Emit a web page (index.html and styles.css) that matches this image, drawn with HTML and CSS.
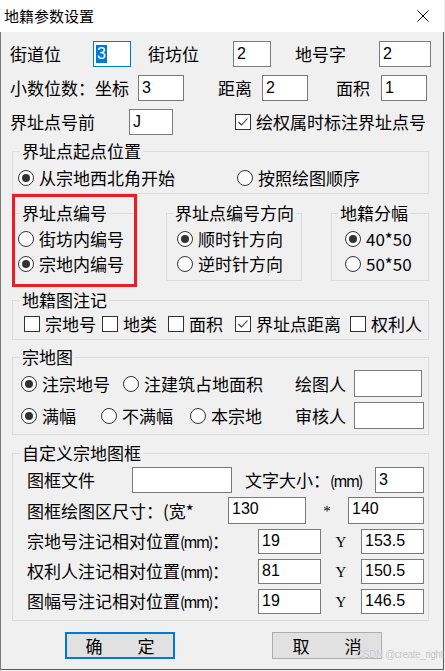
FILE: index.html
```html
<!DOCTYPE html>
<html>
<head lang="zh">
  <meta charset="UTF-8">
  <title>地籍参数设置</title>
  <link rel="stylesheet" href="styles.css">
</head>
<body>
<div class="dlg">
  <div class="caption">
    <span class="caption-text">地籍参数设置</span>
    <svg class="close" width="12" height="12" viewBox="0 0 12 12"><path d="M0.5 0.5 L11.5 11.5 M11.5 0.5 L0.5 11.5" stroke="#000" stroke-width="1" fill="none"/></svg>
  </div>

  <div class="client">
    <!--编码-->
    <div class="row r1">
      <span class="lb street">街道位</span>
      <span class="edit focus w38"><span class="sel">3</span></span>
      <span class="lb block">街坊位</span>
      <span class="edit w38">2</span>
      <span class="lb parcel">地号字</span>
      <span class="edit w52">2</span>
    </div>
    <div class="row r2">
      <span class="lb decimals">小数位数：坐标</span>
      <span class="edit w46">3</span>
      <span class="lb dist">距离</span>
      <span class="edit w46">2</span>
      <span class="lb area">面积</span>
      <span class="edit w46">1</span>
    </div>
    <div class="row r3">
      <span class="lb prefix">界址点号前</span>
      <span class="edit w44">J</span>
      <span class="opt mark-pt"><span class="chk on"><svg width="14" height="14" viewBox="0 0 14 14"><path d="M2.5 7 L5.5 10 L11.5 3.5" stroke="#333" stroke-width="1.1" fill="none"/></svg></span>绘权属时标注界址点号</span>
    </div>

    <!--界址点起点位置-->
    <fieldset class="fs full fs-start">
      <legend>界址点起点位置</legend>
      <div class="row opts start-row">
        <span class="opt o219"><span class="radio on"></span>从宗地西北角开始</span>
        <span class="opt"><span class="radio"></span>按照绘图顺序</span>
      </div>
    </fieldset>

    <div class="grp-row">
      <fieldset class="fs fs-num">
        <legend>界址点编号</legend>
        <div class="row opts"><span class="opt"><span class="radio"></span>街坊内编号</span></div>
        <div class="row opts"><span class="opt"><span class="radio on"></span>宗地内编号</span></div>
      </fieldset>
      <fieldset class="fs fs-dir">
        <legend>界址点编号方向</legend>
        <div class="row opts"><span class="opt"><span class="radio on"></span>顺时针方向</span></div>
        <div class="row opts"><span class="opt"><span class="radio"></span>逆时针方向</span></div>
      </fieldset>
      <fieldset class="fs fs-sheet">
        <legend>地籍分幅</legend>
        <div class="row opts"><span class="opt"><span class="radio on"></span>40*50</span></div>
        <div class="row opts"><span class="opt"><span class="radio"></span>50*50</span></div>
      </fieldset>
      <div class="redmark"></div>
    </div>

    <!--地籍图注记-->
    <fieldset class="fs full fs-notes">
      <legend>地籍图注记</legend>
      <div class="row opts notes-row">
        <span class="opt o78"><span class="chk"></span>宗地号</span>
        <span class="opt o66"><span class="chk"></span>地类</span>
        <span class="opt o67"><span class="chk"></span>面积</span>
        <span class="opt o115"><span class="chk on"><svg width="14" height="14" viewBox="0 0 14 14"><path d="M2.5 7 L5.5 10 L11.5 3.5" stroke="#333" stroke-width="1.1" fill="none"/></svg></span>界址点距离</span>
        <span class="opt"><span class="chk"></span>权利人</span>
      </div>
    </fieldset>

    <!--宗地图-->
    <fieldset class="fs full fs-plot">
      <legend>宗地图</legend>
      <div class="row plot-a">
        <span class="opt o102"><span class="radio on"></span>注宗地号</span>
        <span class="opt o172"><span class="radio"></span>注建筑占地面积</span>
        <span class="lb man">绘图人</span>
        <span class="edit w68"></span>
      </div>
      <div class="row plot-b">
        <span class="opt o80"><span class="radio on"></span>满幅</span>
        <span class="opt o89"><span class="radio"></span>不满幅</span>
        <span class="opt o105"><span class="radio"></span>本宗地</span>
        <span class="lb man">审核人</span>
        <span class="edit w70"></span>
      </div>
    </fieldset>

    <!--自定义宗地图框-->
    <fieldset class="fs full fs-frame">
      <legend>自定义宗地图框</legend>
      <div class="row fr fr1">
        <span class="lb file">图框文件</span>
        <span class="edit w100"></span>
        <span class="lb fsize">文字大小：<span class="mm">(mm)</span></span>
        <span class="edit w49">3</span>
      </div>
      <div class="row fr fr2">
        <span class="lb dim">图框绘图区尺寸：(宽*</span>
        <span class="edit w78 hi">130</span>
        <span class="lb star">*</span>
        <span class="edit w76 hi">140</span>
      </div>
      <div class="row fr fr3">
        <span class="lb pos">宗地号注记相对位置<span class="mm">(mm)</span>：</span>
        <span class="edit w63 hi">19</span>
        <span class="lb ylb">Y</span>
        <span class="edit w63 hi">153.5</span>
      </div>
      <div class="row fr fr3">
        <span class="lb pos">权利人注记相对位置<span class="mm">(mm)</span>：</span>
        <span class="edit w63 hi">81</span>
        <span class="lb ylb">Y</span>
        <span class="edit w63 hi">150.5</span>
      </div>
      <div class="row fr fr3">
        <span class="lb pos">图幅号注记相对位置<span class="mm">(mm)</span>：</span>
        <span class="edit w63 hi">19</span>
        <span class="lb ylb">Y</span>
        <span class="edit w63 hi">146.5</span>
      </div>
    </fieldset>

    <div class="btns">
      <span class="btn default"><span>确</span><span>定</span></span>
      <span class="btn"><span>取</span><span>消</span></span>
    </div>
  </div>

  <span class="watermark">CSDN @create_right</span>
</div>
</body>
</html>
```

FILE: styles.css
```css
* {
  margin: 0;
  padding: 0;
}

body {
  background-color: #f0f0f0;
  font-family: "Noto Sans CJK SC", "Noto Sans", sans-serif;
  font-size: 17px;
  color: #000;
}

.dlg {
  position: relative;
  width: 444px;
  height: 670px;
  box-sizing: border-box;
  background-color: #f0f0f0;
  box-shadow: inset 1px 0 #7a7a7a, inset -1px 0 #5a5a5a, inset 0 -1px #5a5a5a;
}

.caption {
  height: 32px;
  background-color: #fff;
  display: flex;
  align-items: center;
  justify-content: space-between;
  padding: 0 15px 0 4px;
}

.caption-text {
  font-size: 15px;
  line-height: 20px;
}

.client {
  padding-left: 10px;
}

.row {
  display: flex;
  align-items: center;
}

.lb {
  flex: none;
  line-height: 20px;
  white-space: nowrap;
}

.edit {
  flex: none;
  box-sizing: border-box;
  height: 26px;
  border: 1px solid #7a7a7a;
  background-color: #fff;
  padding-left: 3px;
  font-family: "Liberation Sans", sans-serif;
  font-size: 16px;
  display: flex;
  align-items: center;
}

.edit.focus {
  border-color: #0078d7;
  padding-left: 2px;
}

.sel {
  background-color: #0078d7;
  color: #fff;
  line-height: 18px;
  padding: 0 1px;
}

.w38 { width: 38px; }
.w44 { width: 44px; }
.w46 { width: 46px; }
.w49 { width: 49px; }
.w52 { width: 52px; }
.w63 { width: 63px; }
.w68 { width: 68px; }
.w70 { width: 70px; }
.w76 { width: 76px; }
.w78 { width: 78px; }
.w100 { width: 100px; }

/* 顶部三行 */
.r1 { margin-top: 9px; height: 26px; }
.r2 { margin-top: 8px; height: 26px; }
.r3 { margin-top: 8px; height: 26px; }

.street { width: 83px; }
.block { margin-left: 17px; width: 85px; }
.parcel { margin-left: 24px; width: 84px; }
.decimals { width: 128px; }
.dist { margin-left: 34px; width: 44px; }
.area { margin-left: 28px; width: 45px; }
.prefix { width: 119px; }
.mark-pt { margin-left: 62px; }

/* 单选、复选 */
.opt {
  flex: none;
  display: flex;
  align-items: center;
  line-height: 20px;
  white-space: nowrap;
}

.radio,
.chk {
  flex: none;
  box-sizing: border-box;
  width: 16px;
  height: 16px;
  border: 1px solid #333;
  background-color: #fff;
  margin-right: 5px;
  display: flex;
  align-items: center;
  justify-content: center;
}

.radio {
  border-radius: 50%;
}

.radio.on::after {
  content: "";
  width: 8px;
  height: 8px;
  border-radius: 50%;
  background-color: #333;
}

.o66 { width: 66px; }
.o67 { width: 67px; }
.o78 { width: 78px; }
.o80 { width: 80px; }
.o89 { width: 89px; }
.o102 { width: 102px; }
.o105 { width: 105px; }
.o115 { width: 115px; }
.o172 { width: 172px; }
.o219 { width: 219px; }

/* 分组框 */
.fs {
  box-sizing: border-box;
  border: 1px solid #dcdcdc;
  min-width: 0;
}

.fs legend {
  margin-left: 7px;
  padding: 0 2px;
  line-height: 20px;
}

.full {
  margin-left: 2px;
  width: 417px;
}

.fs-start {
  margin-top: 6px;
  padding-bottom: 4px;
}

.start-row {
  margin-top: 6px;
  height: 22px;
  padding-left: 5px;
}

.grp-row {
  position: relative;
  display: flex;
  align-items: flex-start;
  margin: 9px 0 0 2px;
  width: 417px;
}

.grp-row .opts {
  height: 22px;
  margin-top: 3px;
}

.grp-row .opts:first-of-type {
  margin-top: 5px;
}

.grp-row .fs {
  padding-bottom: 5px;
}

.fs-num {
  margin-left: 2px;
  width: 122px;
}

.grp-row .fs-num {
  padding-bottom: 9px;
}

.fs-num legend {
  margin-left: 5px;
}

.fs-num .opts {
  padding-left: 3px;
}

.fs-dir {
  margin-left: 30px;
  width: 136px;
}

.fs-dir legend,
.fs-sheet legend {
  margin-left: 6px;
}

.fs-dir .opts {
  padding-left: 10px;
}

.fs-sheet {
  margin-left: 29px;
  width: 98px;
}

.fs-sheet .opts {
  padding-left: 13px;
}

.redmark {
  position: absolute;
  left: 0;
  top: -9px;
  width: 125px;
  height: 93px;
  box-sizing: border-box;
  border: 3px solid #ec1c24;
}

.fs-notes {
  margin-top: 5px;
  padding-bottom: 4px;
}

.notes-row {
  margin-top: 3px;
  height: 22px;
  padding-left: 11px;
}

.fs-plot {
  margin-top: 7px;
  padding-bottom: 5px;
}

.plot-a,
.plot-b {
  height: 27px;
  padding-left: 8px;
}

.plot-a { margin-top: 3px; }
.plot-b { margin-top: 5px; }
.plot-b .edit { height: 27px; }
.plot-a .edit { height: 27px; }

.man { width: 59px; }

.fs-frame {
  margin-top: 8px;
  padding-bottom: 6px;
}

.fr {
  padding-left: 14px;
  align-items: stretch;
}

.fr .lb {
  align-self: center;
}

.fr .edit {
  height: auto;
}

.fr .edit.hi {
  align-items: flex-start;
  padding-top: 2px;
  line-height: 18px;
}

.fr1 { margin-top: 4px; height: 26px; }
.fr2 { margin-top: 4px; height: 27px; }
.fr3 { margin-top: 5px; height: 25px; }

.file { width: 105px; }
.fsize { margin-left: 13px; width: 130px; }
.dim { width: 201px; }
.pos { width: 231px; }

.star,
.ylb {
  text-align: center;
  font-family: "Liberation Serif", serif;
  font-size: 15px;
}

.star { width: 42px; }
.ylb { width: 40px; }

.mm {
  font-size: 15px;
  letter-spacing: -1.5px;
}

/* 按钮 */
.btns {
  display: flex;
  margin-top: 11px;
  padding-left: 55px;
  gap: 97px;
}

.btn {
  box-sizing: border-box;
  width: 110px;
  height: 27px;
  border: 1px solid #adadad;
  background-color: #e1e1e1;
  display: flex;
  align-items: center;
  justify-content: center;
  gap: 35px;
  line-height: 20px;
}

.btn.default {
  border: 2px solid #0078d7;
}

.watermark {
  position: absolute;
  left: 356px;
  top: 649px;
  font-family: "Liberation Sans", sans-serif;
  font-size: 10px;
  line-height: 12px;
  letter-spacing: -0.4px;
  white-space: nowrap;
  color: #c4c4c4;
  text-shadow: 0 0 1px #fff;
}
```
